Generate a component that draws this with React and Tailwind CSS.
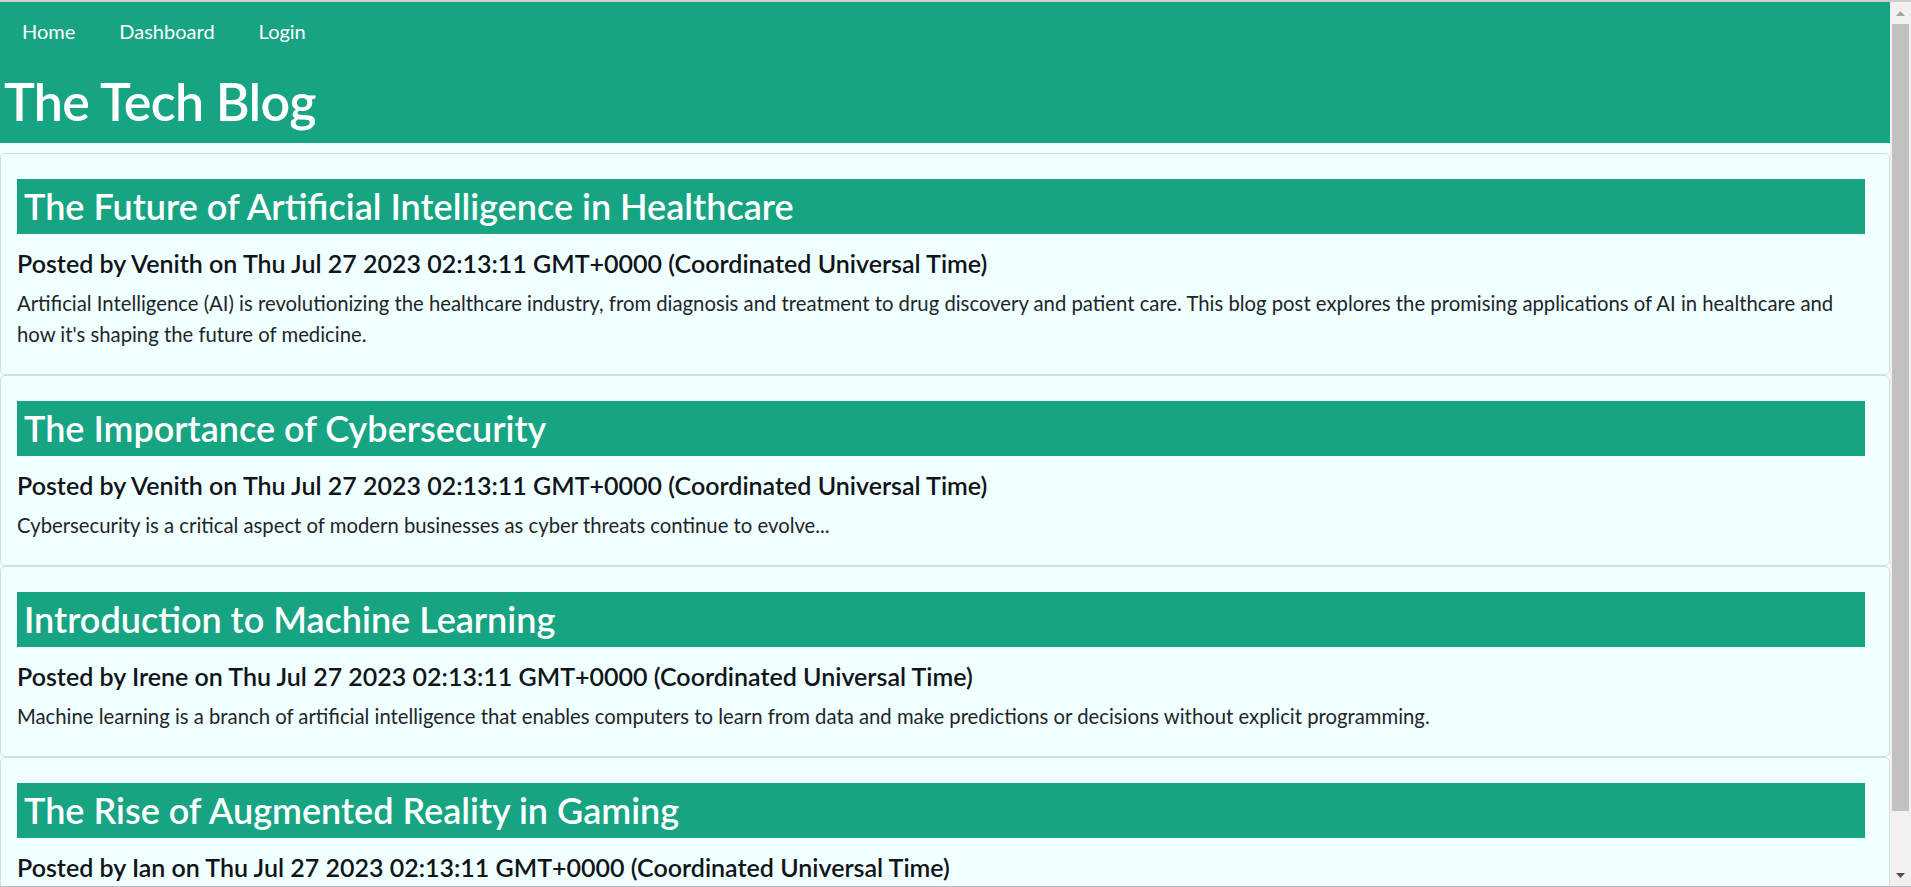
import React from "react";

const posts = [
  {
    title: "The Future of Artificial Intelligence in Healthcare",
    author: "Venith",
    body:
      "Artificial Intelligence (AI) is revolutionizing the healthcare industry, from diagnosis and treatment to drug discovery and patient care. This blog post explores the promising applications of AI in healthcare and how it's shaping the future of medicine.",
  },
  {
    title: "The Importance of Cybersecurity",
    author: "Venith",
    body: "Cybersecurity is a critical aspect of modern businesses as cyber threats continue to evolve...",
  },
  {
    title: "Introduction to Machine Learning",
    author: "Irene",
    body:
      "Machine learning is a branch of artificial intelligence that enables computers to learn from data and make predictions or decisions without explicit programming.",
  },
  {
    title: "The Rise of Augmented Reality in Gaming",
    author: "Ian",
  },
];

const DATE = "Thu Jul 27 2023 02:13:11 GMT+0000 (Coordinated Universal Time)";

function PostCard({ post }) {
  return (
    <article className="shrink-0 rounded-[5px] border border-[#d2dfdf] pt-[25px] pr-6 pb-[24px] pl-4">
      <h2 className="bg-[#16a482] pl-[7px] text-[36px] leading-[55px] font-semibold text-white">
        {post.title}
      </h2>
      <h5 className="mt-[14px] text-[25px] leading-[30px] font-semibold text-[#111418]">
        Posted by {post.author} on {DATE}
      </h5>
      {post.body && (
        <p className="mt-[10px] text-[20.3px] leading-[31px] text-[#212529]">{post.body}</p>
      )}
    </article>
  );
}

function Scrollbar() {
  return (
    <div className="flex w-[21px] shrink-0 flex-col bg-[#f0f0f0]">
      <div className="flex h-[22px] items-center justify-center">
        <svg width="9" height="5" viewBox="0 0 9 5">
          <path d="M4.5 0 L9 5 L0 5 Z" fill="#a3a3a3" />
        </svg>
      </div>
      <div className="mx-[2px] h-[787px] bg-[#c1c1c1]" />
      <div className="flex-1" />
      <div className="flex h-[22px] items-center justify-center">
        <svg width="9" height="5" viewBox="0 0 9 5">
          <path d="M0 0 L9 0 L4.5 5 Z" fill="#505050" />
        </svg>
      </div>
    </div>
  );
}

export default function App() {
  return (
    <div className="flex h-[887px] w-[1911px] flex-col overflow-hidden bg-[#f0ffff] font-['Lato','Noto_Sans',sans-serif]">
      <div className="h-[2px] shrink-0 bg-[#cdcdcd]" />
      <div className="flex min-h-0 flex-1">
        <div className="flex min-w-0 flex-1 flex-col overflow-hidden bg-[#f0ffff]">
          <header className="shrink-0 bg-[#16a482] text-white">
            <nav className="flex h-[58px] items-center gap-[44px] pl-[22px] text-[20px]">
              <a href="#" className="text-white">Home</a>
              <a href="#" className="text-white">Dashboard</a>
              <a href="#" className="text-white">Login</a>
            </nav>
            <h1 className="mt-[10px] mb-[11px] pl-[4px] text-[52px] leading-[62px] font-semibold tracking-[-0.7px]">
              The Tech Blog
            </h1>
          </header>
          <main className="mt-[10px] flex flex-col">
            {posts.map((p) => (
              <PostCard key={p.title} post={p} />
            ))}
          </main>
        </div>
        <Scrollbar />
      </div>
      <div className="h-px shrink-0 bg-[#b4bcc4]" />
    </div>
  );
}
